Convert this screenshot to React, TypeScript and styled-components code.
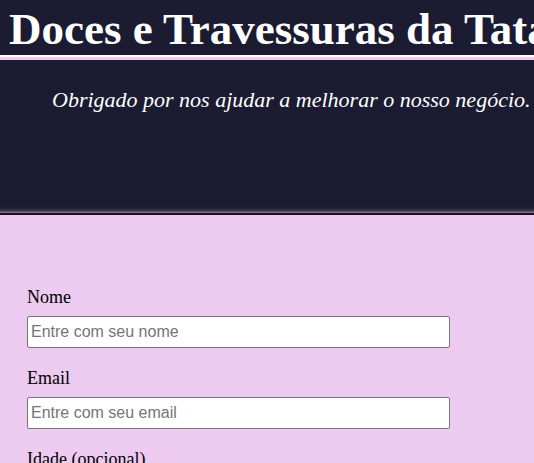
import React from "react";
import styled, { createGlobalStyle } from "styled-components";

const GlobalStyle = createGlobalStyle`
  * { box-sizing: border-box; }
  html { scrollbar-width: none; }
  body {
    margin: 0;
    background: #edcbf1;
    color: #000;
    font-family: "Liberation Serif", "Times New Roman", serif;
    font-size: 18px;
    overflow-x: hidden;
  }
`;

const Header = styled.header`
  background:
    linear-gradient(to bottom, #1b1b32, #2b263e 40%, #574a62 75%, #9a82a2) bottom / 100% 6px no-repeat padding-box,
    #1b1b32;
  color: #fff;
  padding-bottom: 100px;
  border-bottom: 2px solid #1a0f1c;
`;

const Title = styled.h1`
  margin: 0;
  padding: 4px 0 0 9px;
  font-size: 45px;
  line-height: 51px;
  font-weight: 700;
  white-space: nowrap;
  overflow: hidden;
  border-bottom: 2px solid #fff;
`;

const Description = styled.p`
  margin: 0;
  padding: 27px 0 0 52px;
  border-top: 3px solid #edcbf1;
  font-size: 22px;
  line-height: 26px;
  font-style: italic;
  white-space: nowrap;
`;

const Form = styled.form`
  padding: 72px 84px 0 27px;
`;

const Field = styled.div`
  margin-bottom: 20px;
`;

const Label = styled.label`
  display: block;
  margin-bottom: 8px;
  line-height: 21px;
`;

const Input = styled.input`
  display: block;
  width: 100%;
  height: 32px;
  padding: 1px 3px;
  border: 1px solid #767676;
  border-radius: 2px;
  background: #fff;
  font: 16px "Liberation Sans", Arial, sans-serif;

  &::placeholder { color: #757575; }
`;

const fields = [
  { id: "name", label: "Nome", type: "text", placeholder: "Entre com seu nome" },
  { id: "email", label: "Email", type: "email", placeholder: "Entre com seu email" },
  { id: "age", label: "Idade (opcional)", type: "number", placeholder: "" },
];

export default function App() {
  return (
    <>
      <GlobalStyle />
      <Header>
        <Title>Doces e Travessuras da Tata</Title>
        <Description>Obrigado por nos ajudar a melhorar o nosso negócio.</Description>
      </Header>
      <Form>
        {fields.map((field) => (
          <Field key={field.id}>
            <Label htmlFor={field.id}>{field.label}</Label>
            <Input id={field.id} type={field.type} placeholder={field.placeholder} />
          </Field>
        ))}
      </Form>
    </>
  );
}
